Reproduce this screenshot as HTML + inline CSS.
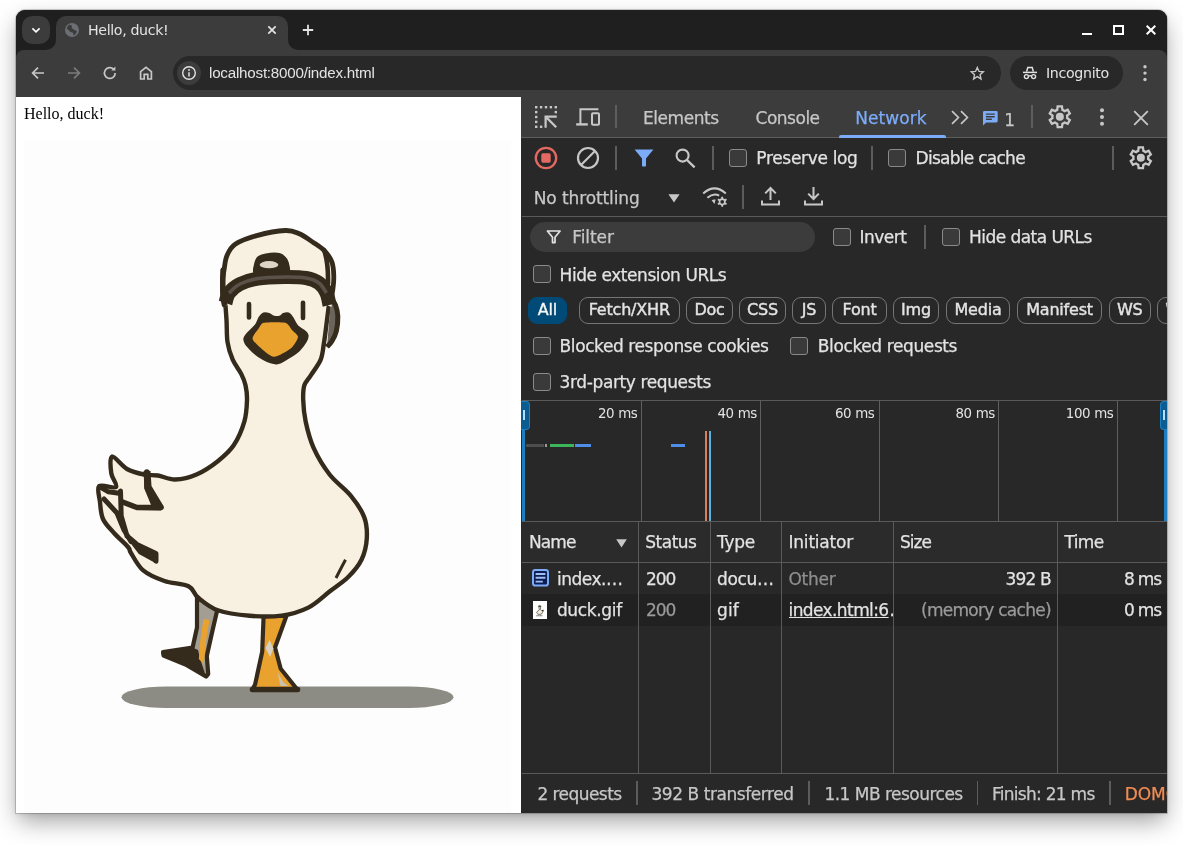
<!DOCTYPE html>
<html><head><meta charset="utf-8"><title>Hello, duck!</title>
<style>
*{box-sizing:border-box;margin:0;padding:0}
html,body{width:1183px;height:845px;overflow:hidden;background:#fff}
body{font-family:"DejaVu Sans","Liberation Sans",sans-serif;position:relative;color:#e3e3e3}
#win{position:absolute;left:16px;top:10px;width:1151px;height:803px;border-radius:9px 9px 0 0;background:#1f1f1f;box-shadow:0 0 0 1px rgba(0,0,0,.17),0 10px 24px -2px rgba(0,0,0,.38),0 1px 4px rgba(0,0,0,.10)}
#clip{position:absolute;left:0;top:0;width:1151px;height:803px;border-radius:9px 9px 0 0;overflow:hidden}
#o{will-change:transform;position:absolute;left:-16px;top:-10px;width:1183px;height:845px}
#o div,#o svg,#o span{position:absolute}
.t{white-space:nowrap;line-height:20px;height:20px}
.ui{font-size:17px;color:#e3e3e3;-webkit-text-stroke:0.25px}
svg{overflow:visible}
.cb{width:17.6px;height:17.6px;border:1.7px solid #8a8a8a;border-radius:3px;background:#3a3a3a}
.vd{width:1.6px;background:#5c5c5c}
.chip{top:297px;height:26.6px;border:1px solid #757575;border-radius:9px;font-size:16px;letter-spacing:-0.2px;line-height:24.6px;text-align:center;color:#e3e3e3;-webkit-text-stroke:0.4px #e3e3e3;white-space:nowrap}
.gl{top:401px;width:1px;height:120px;background:#5e5e5e}
.cl{top:522px;width:1px;height:251px;background:#5a5a5a}
.ov{top:404.3px;font-size:13.4px;letter-spacing:-0.35px;color:#e3e3e3;text-align:right}
</style></head><body>
<div id="win"><div id="clip"><div id="o">
<!-- TABSTRIP -->
<div style="left:16px;top:10px;width:1151px;height:40px;background:#1f1f1f"></div>
<div style="left:22px;top:16px;width:28px;height:28px;border-radius:10.5px;background:#3c3c3c"></div>
<svg style="left:30px;top:24px" width="12" height="12" viewBox="0 0 12 12"><path d="M2.400 4.400 L6 7.800 L9.600 4.400" fill="none" stroke="#fff" stroke-width="1.600"/></svg>
<!-- TOOLBAR -->
<div style="left:16px;top:50px;width:1151px;height:47px;background:#3c3c3c;border-radius:8px 8px 0 0"></div>
<!-- active tab -->
<div style="left:56px;top:16px;width:232px;height:40px;background:#3c3c3c;border-radius:10px 10px 0 0"></div>
<svg style="left:46px;top:40px" width="10" height="10" viewBox="0 0 10 10"><path d="M10 0 V10 H0 A10 10 0 0 0 10 0Z" fill="#3c3c3c"/></svg>
<svg style="left:288px;top:40px" width="10" height="10" viewBox="0 0 10 10"><path d="M0 0 V10 H10 A10 10 0 0 1 0 0Z" fill="#3c3c3c"/></svg>
<!-- favicon globe -->
<svg style="left:65px;top:23px" width="14" height="14" viewBox="0 0 14 14"><circle cx="7" cy="7" r="7" fill="#6b6f74"/><path d="M4.2 1.800 C6 1.600 7.400 2.600 6.800 4.200 C6.400 5.400 8 5.600 8.800 6.600 C9.600 7.600 11.200 7.200 11.800 8.600 C11.400 10.600 10.200 11.800 8.600 12.400 C8 11.400 8.600 10.200 7.600 9.600 C6.400 9 5 9.200 4.400 8 C3.800 6.800 2.200 6.600 1.800 5.200 C2.200 3.800 3 2.600 4.200 1.800Z" fill="#3c3c3c"/></svg>
<span class="t" style="left:88px;top:19.6px;font-size:14.2px;color:#e3e3e3;letter-spacing:-0.36px">Hello, duck!</span>
<svg style="left:266px;top:24px" width="12" height="12" viewBox="0 0 12 12"><path d="M2.3 2.3 L9.7 9.7 M9.7 2.3 L2.3 9.7" stroke="#e3e3e3" stroke-width="1.7" fill="none"/></svg>
<svg style="left:301px;top:23px" width="14" height="14" viewBox="0 0 14 14"><path d="M7 1.8 V12.2 M1.8 7 H12.2" stroke="#e3e3e3" stroke-width="1.8" fill="none"/></svg>
<!-- window controls -->
<div style="left:1082px;top:33px;width:10px;height:2px;background:#fff"></div>
<div style="left:1113px;top:25px;width:11px;height:10px;border:2px solid #fff"></div>
<svg style="left:1146px;top:25px" width="10" height="10" viewBox="0 0 10 10"><path d="M0.7 0.7 L9.3 9.3 M9.3 0.7 L0.7 9.3" stroke="#fff" stroke-width="2" fill="none"/></svg>
<!-- nav icons -->
<svg style="left:31px;top:66px" width="14" height="14" viewBox="0 0 14 14"><path d="M13 7 H2.2 M7 1.6 L1.6 7 L7 12.4" stroke="#c7c7c7" stroke-width="1.7" fill="none"/></svg>
<svg style="left:67px;top:66px" width="14" height="14" viewBox="0 0 14 14"><path d="M1 7 H11.8 M7 1.6 L12.4 7 L7 12.4" stroke="#7b7b7b" stroke-width="1.7" fill="none"/></svg>
<svg style="left:102px;top:65px" width="16" height="16" viewBox="0 0 16 16"><path d="M13.2 8 A5.4 5.4 0 1 1 11.6 4.2" stroke="#c7c7c7" stroke-width="1.7" fill="none"/><path d="M9.2 5.6 H13.4 V1.4 Z" fill="#c7c7c7"/></svg>
<svg style="left:138px;top:65px" width="16" height="16" viewBox="0 0 16 16"><path d="M2.6 14 V6.6 L8 2.4 L13.4 6.6 V14 H9.8 V9.4 H6.2 V14 Z" stroke="#c7c7c7" stroke-width="1.7" fill="none" stroke-linejoin="miter"/></svg>
<!-- omnibox -->
<div style="left:173px;top:56px;width:828px;height:34px;border-radius:17px;background:#282828"></div>
<div style="left:177px;top:61px;width:24px;height:24px;border-radius:12px;background:#3c3c3c"></div>
<svg style="left:181px;top:65px" width="16" height="16" viewBox="0 0 16 16"><circle cx="8" cy="8" r="6.3" stroke="#e3e3e3" stroke-width="1.4" fill="none"/><path d="M8 7.2 V11.4" stroke="#e3e3e3" stroke-width="1.5"/><circle cx="8" cy="5" r="0.95" fill="#e3e3e3"/></svg>
<span class="t" style="left:209px;top:63px;font-family:'Liberation Sans',sans-serif;font-size:15.2px;letter-spacing:-0.23px;color:#e3e3e3">localhost:8000/index.html</span>
<svg style="left:969.6px;top:66px" width="14.6" height="14.6" viewBox="0 0 16 16"><path d="M8 1.6 L9.9 6 L14.6 6.4 L11 9.5 L12.1 14.2 L8 11.7 L3.9 14.2 L5 9.5 L1.4 6.4 L6.1 6 Z" stroke="#c7c7c7" stroke-width="1.5" fill="none" stroke-linejoin="miter"/></svg>
<!-- incognito -->
<div style="left:1010px;top:56px;width:113px;height:34px;border-radius:17px;background:#282828"></div>
<svg style="left:1022px;top:65px" width="16" height="16" viewBox="0 0 16 16"><path d="M4.6 6.6 L5.8 2.6 H10.2 L11.4 6.6" stroke="#e3e3e3" stroke-width="1.5" fill="none"/><path d="M1 7.4 H15" stroke="#e3e3e3" stroke-width="1.5"/><circle cx="4.4" cy="11.6" r="2" stroke="#e3e3e3" stroke-width="1.4" fill="none"/><circle cx="11.6" cy="11.6" r="2" stroke="#e3e3e3" stroke-width="1.4" fill="none"/><path d="M6.4 11.2 Q8 10.2 9.6 11.2" stroke="#e3e3e3" stroke-width="1.3" fill="none"/></svg>
<span class="t" style="left:1046px;top:62.8px;font-size:14.2px;letter-spacing:-0.33px;color:#e3e3e3">Incognito</span>
<svg style="left:1143px;top:65px" width="4" height="16" viewBox="0 0 4 16"><circle cx="2" cy="1.700" r="1.700" fill="#c7c7c7"/><circle cx="2" cy="8.100" r="1.700" fill="#c7c7c7"/><circle cx="2" cy="14.500" r="1.700" fill="#c7c7c7"/></svg>


<!-- DEVTOOLS -->
<div id="dt" style="left:521px;top:97px;width:646px;height:716px;background:#282828"></div>
<!-- PAGE -->
<div id="page" style="left:16px;top:97px;width:505px;height:716px;background:#fff;overflow:hidden">
<span class="t" style="left:8px;top:7px;font-family:'Liberation Serif',serif;font-size:16px;color:#000;line-height:20px">Hello, duck!</span>
<svg style="left:-16px;top:-97px" width="1183" height="845" viewBox="0 0 1183 845">
<rect x="24" y="140" width="487" height="680" fill="#fdfdfd"/>
<rect x="121.5" y="686.500" width="332" height="21.500" rx="45" ry="10.700" fill="#8c8b84"/>
<path d="M197 598 L197 627.500 L192.600 647.500 L163 652 L163.500 655.500 L185.500 664.500 L206 676.500 L208.200 674 L206.800 656 L212.500 630.500 L217.500 609Z" fill="#a39e94" stroke="#352b1d" stroke-width="4.200" stroke-linejoin="round"/>
<path d="M192.600 647.500 L163 652 L163.500 655.500 L185.500 664.500 L206 676.500 L200.500 660 L198 650Z" fill="#352b1d"/>
<path d="M203.500 619 L209.500 620 L206 641 L203.800 664 L198.800 659 L200.600 638Z" fill="#eaa22f"/>
<path d="M263.600 616 L262.200 651.800 L255.100 684.400 L252.300 690 L297.700 690 L280.700 668.800 L275 647.500 L286.400 616Z" fill="#eaa22f" stroke="#352b1d" stroke-width="4.200" stroke-linejoin="round"/>
<path d="M265.500 648 L269.500 640 L273.500 648.500 L270 657Z" fill="#d9d2c4"/>
<path d="M277.500 672 L283 682 L288 686 L280.500 686Z" fill="#c9c2b4"/>
<path d="M252.500 689.500 H297.500" stroke="#352b1d" stroke-width="5.500" stroke-linecap="round"/>
<path d="M224.5 292.0 C224.8 296.7 226.0 311.7 226.5 320.0 C227.0 328.3 226.5 335.4 227.5 342.0 C228.5 348.6 230.4 354.4 232.7 359.7 C235.0 365.0 239.1 369.6 241.2 373.9 C243.3 378.1 244.5 380.8 245.5 385.2 C246.5 389.6 247.2 394.0 247.0 400.0 C246.8 406.0 246.6 413.8 244.4 421.3 C242.2 428.9 238.1 438.7 233.7 445.3 C229.3 451.9 224.0 456.3 217.8 461.2 C211.6 466.1 203.6 471.4 196.5 474.5 C189.4 477.6 181.6 479.3 175.2 479.5 C168.8 479.7 163.2 476.3 158.0 475.5 C152.8 474.7 149.2 475.6 144.0 474.5 C138.8 473.4 132.3 472.0 127.0 469.0 C121.7 466.0 114.6 455.8 112.0 456.5 C109.4 457.2 110.6 468.3 111.3 473.4 C112.0 478.5 118.0 484.9 116.0 487.0 C114.0 489.1 101.9 483.7 99.2 486.2 C96.5 488.7 99.4 496.5 100.0 502.0 C100.6 507.5 100.7 513.8 103.0 519.0 C105.3 524.2 109.8 528.3 114.0 533.0 C118.2 537.7 125.2 543.7 128.0 547.0 C130.8 550.3 128.5 549.1 131.0 553.0 C133.5 556.9 137.6 565.7 143.2 570.4 C148.8 575.1 156.9 578.4 164.5 581.0 C172.1 583.6 182.9 583.5 188.5 586.3 C194.1 589.0 193.1 593.5 198.0 597.5 C202.9 601.5 209.2 607.2 217.8 610.3 C226.4 613.3 239.0 614.9 249.7 615.8 C260.3 616.7 271.9 617.0 281.7 615.6 C291.5 614.2 300.3 611.6 308.3 607.6 C316.3 603.6 323.0 596.6 329.6 591.5 C336.2 586.4 342.9 582.3 348.2 577.0 C353.5 571.7 358.4 566.1 361.5 559.7 C364.6 553.3 366.4 545.5 366.8 538.4 C367.2 531.3 366.9 524.2 364.2 517.1 C361.5 510.0 356.7 502.9 350.9 495.8 C345.1 488.7 335.8 482.5 329.6 474.5 C323.4 466.5 317.6 456.8 313.6 447.9 C309.6 439.0 307.3 429.3 305.6 421.3 C303.9 413.3 303.4 406.0 303.2 400.0 C303.0 394.0 303.1 389.3 304.4 385.2 C305.7 381.1 308.1 379.6 310.8 375.3 C313.5 371.1 318.5 365.1 320.7 359.7 C322.9 354.2 322.9 349.2 324.0 342.6 C325.1 336.0 326.0 327.8 327.0 320.0 C328.0 312.2 329.5 300.0 330.0 296.0 L330 270 L224.500 270Z" fill="#f8f1e2" stroke="none"/>
<path d="M224.5 292.0 C224.8 296.7 226.0 311.7 226.5 320.0 C227.0 328.3 226.5 335.4 227.5 342.0 C228.5 348.6 230.4 354.4 232.7 359.7 C235.0 365.0 239.1 369.6 241.2 373.9 C243.3 378.1 244.5 380.8 245.5 385.2 C246.5 389.6 247.2 394.0 247.0 400.0 C246.8 406.0 246.6 413.8 244.4 421.3 C242.2 428.9 238.1 438.7 233.7 445.3 C229.3 451.9 224.0 456.3 217.8 461.2 C211.6 466.1 203.6 471.4 196.5 474.5 C189.4 477.6 181.6 479.3 175.2 479.5 C168.8 479.7 163.2 476.3 158.0 475.5 C152.8 474.7 149.2 475.6 144.0 474.5 C138.8 473.4 132.3 472.0 127.0 469.0 C121.7 466.0 114.6 455.8 112.0 456.5 C109.4 457.2 110.6 468.3 111.3 473.4 C112.0 478.5 118.0 484.9 116.0 487.0 C114.0 489.1 101.9 483.7 99.2 486.2 C96.5 488.7 99.4 496.5 100.0 502.0 C100.6 507.5 100.7 513.8 103.0 519.0 C105.3 524.2 109.8 528.3 114.0 533.0 C118.2 537.7 125.2 543.7 128.0 547.0 C130.8 550.3 128.5 549.1 131.0 553.0 C133.5 556.9 137.6 565.7 143.2 570.4 C148.8 575.1 156.9 578.4 164.5 581.0 C172.1 583.6 182.9 583.5 188.5 586.3 C194.1 589.0 193.1 593.5 198.0 597.5 C202.9 601.5 209.2 607.2 217.8 610.3 C226.4 613.3 239.0 614.9 249.7 615.8 C260.3 616.7 271.9 617.0 281.7 615.6 C291.5 614.2 300.3 611.6 308.3 607.6 C316.3 603.6 323.0 596.6 329.6 591.5 C336.2 586.4 342.9 582.3 348.2 577.0 C353.5 571.7 358.4 566.1 361.5 559.7 C364.6 553.3 366.4 545.5 366.8 538.4 C367.2 531.3 366.9 524.2 364.2 517.1 C361.5 510.0 356.7 502.9 350.9 495.8 C345.1 488.7 335.8 482.5 329.6 474.5 C323.4 466.5 317.6 456.8 313.6 447.9 C309.6 439.0 307.3 429.3 305.6 421.3 C303.9 413.3 303.4 406.0 303.2 400.0 C303.0 394.0 303.1 389.3 304.4 385.2 C305.7 381.1 308.1 379.6 310.8 375.3 C313.5 371.1 318.5 365.1 320.7 359.7 C322.9 354.2 322.9 349.2 324.0 342.6 C325.1 336.0 326.0 327.8 327.0 320.0 C328.0 312.2 329.5 300.0 330.0 296.0" fill="none" stroke="#352b1d" stroke-width="4.400" stroke-linejoin="round"/>
<path d="M146.800 472 L147 487.500 L152.500 499 L161 507.500 L137 507.500 L122.600 502" fill="none" stroke="#352b1d" stroke-width="5.600" stroke-linejoin="round" stroke-linecap="round"/>
<path d="M99.500 486.500 L108.500 491.800 L119 493.300 M120.500 491 L121.200 516 L127 536 L137 544.500 L156 553.500 L156 561 M104 499 L117 513 L124 530 L131 541.500" fill="none" stroke="#352b1d" stroke-width="5" stroke-linejoin="round" stroke-linecap="round"/>
<path d="M127 536 L137 544.500 L156 553.500 L156.500 562 L140 553Z" fill="#352b1d" stroke="#352b1d" stroke-width="3" stroke-linejoin="round"/>
<path d="M143.500 471 L150.500 471 L151.500 486 L163.500 506 L161 510.500 L138 510 L137 505.500 L151 505 L144.500 489Z" fill="#352b1d"/>
<path d="M345.500 559.700 Q339 572 336 578" fill="none" stroke="#352b1d" stroke-width="3"/>
<path d="M331.0 298.0 C331.8 299.2 334.4 302.0 335.5 305.0 C336.6 308.0 337.7 311.7 337.8 316.0 C337.9 320.3 337.4 326.8 336.4 331.0 C335.4 335.2 333.6 338.3 332.0 341.0 C330.4 343.7 327.8 346.0 327.0 347.0" fill="#6a645a" stroke="#352b1d" stroke-width="5"/>
<path d="M224.1 305.0 C223.5 303.0 222.8 297.9 222.6 293.9 C222.4 289.9 222.4 285.1 222.7 281.1 C222.9 277.1 223.4 274.0 224.1 269.7 C224.8 265.4 225.1 259.8 227.0 255.5 C228.9 251.2 230.5 247.4 235.5 244.1 C240.5 240.8 248.5 237.9 256.8 235.6 C265.1 233.3 278.1 230.8 285.2 230.5 C292.3 230.2 294.7 231.8 299.4 233.8 C304.1 235.8 309.3 239.8 313.6 242.7 C317.9 245.6 321.9 248.0 325.0 251.3 C328.1 254.6 330.6 258.4 332.1 262.6 C333.6 266.9 333.7 272.5 333.8 276.8 C333.9 281.1 333.5 284.3 333.0 288.2 C332.5 292.1 331.7 297.0 331.0 300.0 C330.3 303.0 334.2 308.5 329.0 306.0 C323.8 303.5 313.2 288.5 300.0 285.0 C286.8 281.5 262.3 281.5 250.0 285.0 C237.7 288.5 230.3 302.7 226.0 306.0 C221.7 309.3 224.7 307.0 224.1 305.0Z" fill="#f8f1e2" stroke="none"/>
<path d="M224.1 305.0 C223.8 303.1 222.8 297.9 222.6 293.9 C222.4 289.9 222.4 285.1 222.7 281.1 C222.9 277.1 223.4 274.0 224.1 269.7 C224.8 265.4 225.1 259.8 227.0 255.5 C228.9 251.2 230.5 247.4 235.5 244.1 C240.5 240.8 248.5 237.9 256.8 235.6 C265.1 233.3 278.1 230.8 285.2 230.5 C292.3 230.2 294.7 231.8 299.4 233.8 C304.1 235.8 309.3 239.8 313.6 242.7 C317.9 245.6 321.9 248.0 325.0 251.3 C328.1 254.6 330.6 258.4 332.1 262.6 C333.6 266.9 333.7 272.5 333.8 276.8 C333.9 281.1 333.5 284.3 333.0 288.2 C332.5 292.1 331.3 298.0 331.0 300.0" fill="none" stroke="#352b1d" stroke-width="4.800" stroke-linecap="round"/>
<path d="M324 250 Q328.500 262 328 284" fill="none" stroke="#352b1d" stroke-width="4.600" stroke-linecap="round"/>
<path d="M223 270 Q222 285 224.500 303" fill="none" stroke="#352b1d" stroke-width="5.400" stroke-linecap="round"/>
<path d="M225.5 303.0 C226.1 301.3 226.6 296.2 229.0 293.0 C231.4 289.8 235.2 286.4 240.0 284.0 C244.8 281.6 250.5 279.7 258.0 278.5 C265.5 277.3 277.0 277.1 285.0 277.0 C293.0 276.9 300.3 277.0 306.0 278.0 C311.7 279.0 315.6 280.5 319.0 283.0 C322.4 285.5 324.8 289.3 326.5 293.0 C328.2 296.7 329.0 303.0 329.5 305.0" fill="none" stroke="#352b1d" stroke-width="14" stroke-linecap="butt"/>
<path d="M229.0 293.0 C230.8 291.5 235.2 286.4 240.0 284.0 C244.8 281.6 250.5 279.7 258.0 278.5 C265.5 277.3 277.0 277.1 285.0 277.0 C293.0 276.9 300.3 277.0 306.0 278.0 C311.7 279.0 315.6 280.5 319.0 283.0 C322.4 285.5 325.2 291.3 326.5 293.0" fill="none" stroke="#5a5248" stroke-width="3.600" stroke-linecap="butt"/>
<path d="M255.0 269.0 C255.5 267.3 256.2 261.2 258.0 259.0 C259.8 256.8 262.5 256.2 266.0 255.5 C269.5 254.8 275.8 254.2 279.0 255.0 C282.2 255.8 284.0 257.8 285.5 260.0 C287.0 262.2 287.6 266.7 288.0 268.0 L288 272 L255 272Z" fill="#352b1d" stroke="#352b1d" stroke-width="4" stroke-linejoin="round"/>
<ellipse cx="269" cy="264.700" rx="9.300" ry="3.600" fill="#ddd6c6"/>
<path d="M249 304 V317.500 M303 302.800 V318" stroke="#352b1d" stroke-width="4.600" stroke-linecap="round"/>
<path d="M245.5 338.4 C246.4 334.7 254.0 329.4 256.5 326.0 C259.0 322.6 259.2 319.9 260.5 318.0 C261.8 316.1 262.7 315.0 264.0 314.5 C265.3 314.0 266.9 314.4 268.5 315.0 C270.1 315.6 272.0 317.3 273.9 317.8 C275.8 318.3 278.3 318.3 280.0 317.8 C281.7 317.3 282.7 315.6 284.0 315.0 C285.3 314.4 286.7 313.9 288.0 314.5 C289.3 315.1 290.2 316.4 291.6 318.5 C293.0 320.6 294.1 324.2 296.6 327.0 C299.1 329.8 306.0 331.9 306.5 335.5 C307.0 339.1 302.5 344.8 299.4 348.3 C296.3 351.9 291.9 354.5 288.1 356.8 C284.3 359.1 280.7 362.1 276.7 362.3 C272.7 362.5 268.2 360.5 263.9 358.2 C259.6 355.9 254.2 351.6 251.1 348.3 C248.0 345.0 244.6 342.1 245.5 338.4Z" fill="#352b1d" stroke="#352b1d" stroke-width="4.200" stroke-linejoin="round"/>
<path d="M252.5 338.4 C252.4 336.2 257.7 329.8 259.0 328.0 C260.3 326.2 260.9 323.3 264.0 322.7 C267.1 322.1 281.9 321.8 285.2 322.7 C288.5 323.6 290.5 328.3 292.0 330.0 C293.5 331.7 298.1 334.9 298.0 337.0 C297.9 339.1 293.8 346.0 291.0 348.3 C288.2 350.6 277.6 357.0 273.9 356.8 C270.2 356.6 262.1 349.0 259.6 346.9 C257.1 344.8 252.6 340.6 252.5 338.4Z" fill="#eaa22f"/>
</svg></div>
<!-- DT TAB BAR -->
<div style="left:521px;top:97px;width:646px;height:40px;background:#3c3c3c"></div>
<div style="left:521px;top:137px;width:646px;height:1px;background:#5e5e5e"></div>

<!-- inspect icon -->
<svg style="left:535px;top:106px" width="22" height="22" viewBox="0 0 22 22"><g fill="#c7c7c7"><rect x="0" y="0" width="2.4" height="2.4"/><rect x="4.9" y="0" width="2.4" height="2.4"/><rect x="9.8" y="0" width="2.4" height="2.4"/><rect x="14.7" y="0" width="2.4" height="2.4"/><rect x="19.6" y="0" width="2.4" height="2.4"/><rect x="0" y="4.9" width="2.4" height="2.4"/><rect x="0" y="9.8" width="2.4" height="2.4"/><rect x="0" y="14.7" width="2.4" height="2.4"/><rect x="0" y="19.6" width="2.4" height="2.4"/><rect x="19.6" y="4.9" width="2.4" height="2.4"/><rect x="4.9" y="19.6" width="2.4" height="2.4"/></g><path d="M10.6 21.8 V10.6 H21.8 M11.4 11.400 L21.2 21.200" fill="none" stroke="#c7c7c7" stroke-width="2.2"/></svg>
<!-- device icon -->
<svg style="left:576px;top:108px" width="25" height="19" viewBox="0 0 25 19"><path d="M4.4 16.4 V1.2 H22.4" fill="none" stroke="#c7c7c7" stroke-width="2"/><path d="M0.2 16.400 H11.8" stroke="#c7c7c7" stroke-width="2.4"/><rect x="16" y="5.200" width="7" height="11.600" rx="1" fill="none" stroke="#c7c7c7" stroke-width="2"/></svg>
<div class="vd" style="left:615.1px;top:105px;height:23px;background:#5e5e5e"></div>
<span class="t ui" style="left:643.10px;top:108.02px;color:#c7c7c7;letter-spacing:-0.468px">Elements</span>
<span class="t ui" style="left:755.50px;top:108.02px;color:#c7c7c7;letter-spacing:-0.484px">Console</span>
<span class="t ui" style="left:855.30px;top:108.02px;color:#7cacf8;letter-spacing:0.046px">Network</span>
<div style="left:839px;top:135.400px;width:107px;height:2.600px;background:#7cacf8;border-radius:2px 2px 0 0"></div>
<svg style="left:951px;top:110px" width="18" height="15" viewBox="0 0 18 15"><path d="M1 1.2 L7.4 7.5 L1 13.8 M10 1.2 L16.4 7.5 L10 13.8" fill="none" stroke="#c7c7c7" stroke-width="1.7"/></svg>
<svg style="left:982.5px;top:110.800px" width="14.7" height="14.7" viewBox="0 0 16 16"><path d="M1.5 0 H14.5 A1.5 1.5 0 0 1 16 1.5 V11 A1.5 1.5 0 0 1 14.5 12.5 H3.4 L0 15.8 V1.5 A1.5 1.5 0 0 1 1.5 0 Z" fill="#7cacf8"/><path d="M3.2 3.4 H12.8 M3.2 6.2 H12.8 M3.2 9 H9.6" stroke="#3c3c3c" stroke-width="1.5"/></svg>
<span class="t ui" style="left:1004.30px;top:109.52px;color:#c7c7c7;letter-spacing:0.000px">1</span>
<div class="vd" style="left:1031.1px;top:105px;height:23px;background:#5e5e5e"></div>
<svg class="gear" style="left:1046.1px;top:103.4px" width="27.6" height="27.6" viewBox="0 0 24 24"><path fill="#c7c7c7" fill-rule="evenodd" d="M9.25 22l-.4-3.2a5.5 5.5 0 0 1-1.16-.68l-2.97 1.25-2.75-4.75 2.57-1.95a4.6 4.6 0 0 1 0-1.34L1.97 9.38l2.75-4.75L7.7 5.88a6.8 6.8 0 0 1 1.15-.68L9.25 2h5.5l.4 3.2c.42.2.8.42 1.16.68l2.97-1.25 2.75 4.75-2.57 1.95a4.600 4.600 0 0 1 0 1.340l2.570 1.950-2.750 4.750-2.950-1.250a6.800 6.800 0 0 1-1.150.680l-.4 3.200h-5.500zm1.750-2h1.980l.35-2.650a5.600 5.600 0 0 0 2.620-1.520l2.470 1.020.98-1.700-2.150-1.630a5.500 5.500 0 0 0 0-3.040l2.150-1.630-.98-1.700-2.470 1.050a5.500 5.500 0 0 0-2.620-1.550L13 4h-1.980l-.35 2.650a5.600 5.600 0 0 0-2.620 1.520L5.580 7.150l-.98 1.700 2.150 1.600a5.500 5.500 0 0 0 0 3.080L4.600 15.150l.98 1.700 2.470-1.050a5.500 5.500 0 0 0 2.600 1.550L11 20zm1.050-4.500a3.500 3.500 0 1 0 0-7 3.500 3.500 0 0 0 0 7z"/></svg>
<svg style="left:1100px;top:108px" width="4" height="18" viewBox="0 0 4 18"><circle cx="2" cy="2.300" r="2" fill="#c7c7c7"/><circle cx="2" cy="9" r="2" fill="#c7c7c7"/><circle cx="2" cy="15.700" r="2" fill="#c7c7c7"/></svg>
<svg style="left:1133px;top:110px" width="16" height="16" viewBox="0 0 16 16"><path d="M1.2 1.2 L14.8 14.8 M14.8 1.2 L1.2 14.8" stroke="#c7c7c7" stroke-width="1.8" fill="none"/></svg>
<!-- NETWORK TOOLBAR ROW 1 -->
<svg style="left:535px;top:147px" width="22" height="22" viewBox="0 0 22 22"><circle cx="11" cy="11" r="10.200" fill="none" stroke="#e46962" stroke-width="2.3"/><rect x="6.300" y="6.300" width="9.400" height="9.400" rx="1.6" fill="#e46962"/></svg>
<svg style="left:577px;top:147px" width="22" height="22" viewBox="0 0 22 22"><circle cx="11" cy="11" r="10" fill="none" stroke="#c7c7c7" stroke-width="2.2"/><path d="M4 18 L18 4" stroke="#c7c7c7" stroke-width="2.2"/></svg>
<div class="vd" style="left:615.1px;top:146px;height:24px"></div>
<svg style="left:634px;top:149px" width="20" height="18" viewBox="0 0 20 18"><path d="M0.6 0.4 H19.4 L12 9.6 V16.4 Q12 17.6 10.8 17.6 H9.2 Q8 17.6 8 16.4 V9.6 Z" fill="#7cacf8"/></svg>
<svg style="left:675px;top:148px" width="21" height="20" viewBox="0 0 21 20"><circle cx="7.6" cy="7.6" r="6" fill="none" stroke="#c7c7c7" stroke-width="2.1"/><path d="M12 12 L19.6 19.4" stroke="#c7c7c7" stroke-width="2.4"/></svg>
<div class="vd" style="left:712.1px;top:146px;height:24px"></div>
<div class="cb" style="left:729.2px;top:149.1px"></div>
<span class="t ui" style="left:756.30px;top:148.22px;color:#e3e3e3;letter-spacing:-0.323px">Preserve log</span>
<div class="vd" style="left:871.1px;top:146px;height:24px"></div>
<div class="cb" style="left:888.2px;top:149.1px"></div>
<span class="t ui" style="left:915.60px;top:148.22px;color:#e3e3e3;letter-spacing:-0.732px">Disable cache</span>
<div class="vd" style="left:1112.1px;top:146px;height:24px"></div>
<svg class="gear" style="left:1127.1px;top:143.700px" width="27.6" height="27.6" viewBox="0 0 24 24"><path fill="#c7c7c7" fill-rule="evenodd" d="M9.25 22l-.4-3.2a5.5 5.5 0 0 1-1.16-.68l-2.97 1.25-2.75-4.75 2.57-1.95a4.6 4.6 0 0 1 0-1.34L1.97 9.38l2.75-4.75L7.7 5.88a6.8 6.8 0 0 1 1.15-.68L9.25 2h5.5l.4 3.2c.42.2.8.42 1.16.68l2.97-1.25 2.75 4.75-2.57 1.95a4.600 4.600 0 0 1 0 1.340l2.570 1.950-2.750 4.750-2.950-1.250a6.800 6.800 0 0 1-1.150.680l-.4 3.200h-5.500zm1.750-2h1.980l.35-2.650a5.600 5.600 0 0 0 2.620-1.520l2.470 1.020.98-1.700-2.150-1.630a5.500 5.500 0 0 0 0-3.040l2.150-1.630-.98-1.700-2.470 1.050a5.500 5.500 0 0 0-2.620-1.550L13 4h-1.980l-.35 2.650a5.600 5.600 0 0 0-2.620 1.520L5.580 7.150l-.98 1.700 2.150 1.600a5.500 5.500 0 0 0 0 3.080L4.600 15.150l.98 1.700 2.470-1.050a5.500 5.500 0 0 0 2.600 1.550L11 20zm1.050-4.500a3.500 3.500 0 1 0 0-7 3.500 3.500 0 0 0 0 7z"/></svg>
<!-- ROW 2 -->
<span class="t ui" style="left:533.70px;top:187.72px;color:#c7c7c7;letter-spacing:-0.102px">No throttling</span>
<svg style="left:668px;top:194px" width="12" height="9" viewBox="0 0 12 9"><path d="M0.4 0.2 H11.6 L6 8.6 Z" fill="#c7c7c7"/></svg>
<svg style="left:702px;top:186px" width="26" height="21" viewBox="0 0 26 21"><path d="M1.2 7.4 Q12.5 -2.6 23.8 7.4" fill="none" stroke="#c7c7c7" stroke-width="2"/><path d="M5.4 11.8 Q11.5 6.4 17.2 9.6" fill="none" stroke="#c7c7c7" stroke-width="2"/><path d="M9.6 14.200 L12.5 18 L13.6 13.600 Q11.6 13 9.600 14.200Z" fill="#c7c7c7"/><circle cx="20.2" cy="15.8" r="2.700" fill="none" stroke="#c7c7c7" stroke-width="1.700"/><path d="M22.62 17.20 L24.53 18.30 M20.20 18.60 L20.20 20.80 M17.78 17.20 L15.87 18.30 M17.78 14.40 L15.87 13.30 M20.20 13.00 L20.20 10.80 M22.62 14.40 L24.53 13.30 " stroke="#c7c7c7" stroke-width="1.900" fill="none"/></svg>
<div class="vd" style="left:742.1px;top:185px;height:24px"></div>
<svg style="left:761px;top:186px" width="19" height="20" viewBox="0 0 19 20"><path d="M9.5 14 V2.4 M4.2 7.4 L9.5 2 L14.8 7.4" fill="none" stroke="#c7c7c7" stroke-width="2"/><path d="M1 14.6 V18.6 H18 V14.6" fill="none" stroke="#c7c7c7" stroke-width="2"/></svg>
<svg style="left:803.5px;top:186px" width="19" height="20" viewBox="0 0 19 20"><path d="M9.5 1 V12.6 M4.2 7.6 L9.5 13 L14.8 7.600" fill="none" stroke="#c7c7c7" stroke-width="2"/><path d="M1 14.6 V18.6 H18 V14.6" fill="none" stroke="#c7c7c7" stroke-width="2"/></svg>
<div style="left:522px;top:216px;width:645px;height:1px;background:#5a5a5a"></div>
<!-- FILTER ROW -->
<div style="left:530px;top:222px;width:285px;height:30px;border-radius:15px;background:#3c3c3c"></div>
<svg style="left:546.3px;top:230.300px" width="15.5" height="14" viewBox="0 0 15.5 14"><path d="M1.4 1 H14.100 L9 7.200 V12.600 H6.500 V7.200 Z" fill="none" stroke="#e3e3e3" stroke-width="1.7" stroke-linejoin="round"/></svg>
<span class="t ui" style="left:572.20px;top:226.82px;color:#c7c7c7;letter-spacing:-0.084px">Filter</span>
<div class="cb" style="left:833.2px;top:228.1px"></div>
<span class="t ui" style="left:859.50px;top:226.82px;color:#e3e3e3;letter-spacing:-0.527px">Invert</span>
<div class="vd" style="left:924.1px;top:225px;height:24px"></div>
<div class="cb" style="left:942.2px;top:228.1px"></div>
<span class="t ui" style="left:969.10px;top:226.82px;color:#e3e3e3;letter-spacing:-0.553px">Hide data URLs</span>
<div class="cb" style="left:533.2px;top:265.1px"></div>
<span class="t ui" style="left:559.60px;top:265.02px;color:#e3e3e3;letter-spacing:-0.443px">Hide extension URLs</span>
<!-- CHIPS -->
<div class="chip" style="left:527.6px;width:39.4px;background:#004a77;border-color:#004a77;color:#fff">All</div>
<div class="chip" style="left:578.6px;width:101.4px">Fetch/XHR</div>
<div class="chip" style="left:685.6px;width:47.9px">Doc</div>
<div class="chip" style="left:739.1px;width:46.9px">CSS</div>
<div class="chip" style="left:791.6px;width:34.9px">JS</div>
<div class="chip" style="left:832.1px;width:54.9px">Font</div>
<div class="chip" style="left:892.6px;width:46.9px">Img</div>
<div class="chip" style="left:945.6px;width:64.9px">Media</div>
<div class="chip" style="left:1016.6px;width:85.9px">Manifest</div>
<div class="chip" style="left:1108.6px;width:42.4px">WS</div>
<div class="chip" style="left:1156.6px;width:60.9px;text-align:left;padding-left:8px">Wasm</div>
<div class="cb" style="left:533.2px;top:337.1px"></div>
<span class="t ui" style="left:559.60px;top:336.22px;color:#e3e3e3;letter-spacing:-0.407px">Blocked response cookies</span>
<div class="cb" style="left:790.2px;top:337.1px"></div>
<span class="t ui" style="left:817.80px;top:336.22px;color:#e3e3e3;letter-spacing:-0.388px">Blocked requests</span>
<div class="cb" style="left:533.2px;top:373.1px"></div>
<span class="t ui" style="left:559.60px;top:372.42px;color:#e3e3e3;letter-spacing:-0.385px">3rd-party requests</span>
<!-- OVERVIEW -->
<div style="left:522px;top:400px;width:645px;height:1px;background:#5a5a5a"></div>
<div class="gl" style="left:641px"></div><div class="gl" style="left:760px"></div><div class="gl" style="left:879px"></div><div class="gl" style="left:998px"></div><div class="gl" style="left:1117px"></div>
<span class="t ov" style="left:560px;width:77.5px">20 ms</span>
<span class="t ov" style="left:680px;width:77px">40 ms</span>
<span class="t ov" style="left:797px;width:77.5px">60 ms</span>
<span class="t ov" style="left:917px;width:78px">80 ms</span>
<span class="t ov" style="left:1036px;width:77.5px">100 ms</span>
<div style="left:526px;top:443.5px;width:18px;height:3.5px;background:#4d4d4d"></div>
<div style="left:544.5px;top:443.5px;width:2.5px;height:3.5px;background:#9a9a9a"></div>
<div style="left:549.5px;top:443.5px;width:24.5px;height:3.5px;background:#3cb55a"></div>
<div style="left:575px;top:443.5px;width:15.5px;height:3.5px;background:#4f8ee8"></div>
<div style="left:671px;top:443.5px;width:14px;height:3.5px;background:#4f8ee8"></div>
<div style="left:705px;top:431px;width:2.4px;height:90px;background:#d9815d"></div>
<div style="left:709px;top:431px;width:2.4px;height:90px;background:#5fb0dc"></div>
<!-- handles -->
<div style="left:521.5px;top:401px;width:3.5px;height:120px;background:#1c7dc0"></div>
<div style="left:521px;top:401px;width:9px;height:29px;background:#0b5c90;border-radius:0 4px 4px 0;border:1px solid #1c7dc0;border-left:0"></div>
<div style="left:523px;top:410px;width:2px;height:10px;background:#b5dcff"></div>
<div style="left:1164px;top:401px;width:3px;height:120px;background:#1c7dc0"></div>
<div style="left:1160px;top:401px;width:9px;height:29px;background:#0b5c90;border-radius:4px 0 0 4px;border:1px solid #1c7dc0;border-right:0"></div>
<div style="left:1163px;top:410px;width:2px;height:10px;background:#b5dcff"></div>
<!-- TABLE -->
<div style="left:522px;top:521px;width:645px;height:1px;background:#5a5a5a"></div>
<div style="left:522px;top:522px;width:645px;height:40px;background:#2b2b2b"></div>
<div style="left:522px;top:562px;width:645px;height:1px;background:#5a5a5a"></div>
<div style="left:522px;top:594px;width:645px;height:31.5px;background:#212121"></div>
<div class="cl" style="left:638px"></div><div class="cl" style="left:710px"></div><div class="cl" style="left:781px"></div><div class="cl" style="left:893px"></div><div class="cl" style="left:1057px"></div>
<span class="t ui" style="left:529.00px;top:531.82px;color:#e3e3e3;letter-spacing:-0.889px">Name</span>
<svg style="left:616px;top:538.5px" width="11" height="9" viewBox="0 0 11 9"><path d="M0.2 0.2 H10.8 L5.5 8.6 Z" fill="#c7c7c7"/></svg>
<span class="t ui" style="left:645.30px;top:531.82px;color:#e3e3e3;letter-spacing:-0.512px">Status</span>
<span class="t ui" style="left:717.00px;top:531.82px;color:#e3e3e3;letter-spacing:-0.287px">Type</span>
<span class="t ui" style="left:788.50px;top:531.82px;color:#e3e3e3;letter-spacing:-0.208px">Initiator</span>
<span class="t ui" style="left:899.90px;top:531.82px;color:#e3e3e3;letter-spacing:-0.974px">Size</span>
<span class="t ui" style="left:1064.50px;top:531.82px;color:#e3e3e3;letter-spacing:-0.626px">Time</span>
<!-- row 1 -->
<svg style="left:531.5px;top:569.2px" width="17" height="17.600" viewBox="0 0 17 17.600"><rect x="1" y="1" width="15" height="15.600" rx="2.400" fill="#0c1d52" stroke="#7cacf8" stroke-width="2"/><path d="M3.600 5 H13.400 M3.600 8.800 H13.400 M3.600 12.600 H10.800" stroke="#9dbdf5" stroke-width="1.900"/></svg>
<span class="t ui" style="left:556.90px;top:568.62px;color:#e3e3e3;letter-spacing:-0.488px">index.…</span>
<span class="t ui" style="left:645.90px;top:568.62px;color:#e3e3e3;letter-spacing:-1.050px">200</span>
<span class="t ui" style="left:717.00px;top:568.62px;color:#e3e3e3;letter-spacing:-0.343px">docu…</span>
<span class="t ui" style="left:788.50px;top:568.62px;color:#8f8f8f;letter-spacing:-0.274px">Other</span>
<span class="t ui" style="left:1005.40px;top:568.62px;color:#e3e3e3;letter-spacing:-0.823px">392 B</span>
<span class="t ui" style="left:1123.90px;top:568.62px;color:#e3e3e3;letter-spacing:-1.134px">8 ms</span>
<!-- row 2 -->
<div style="left:533px;top:601px;width:14.200px;height:18px;background:#fff"></div>
<svg style="left:533px;top:601px" width="14.200" height="18" viewBox="0 0 14.200 18"><path d="M3 14.800 H9.600" stroke="#8a8a80" stroke-width="0.900"/><path d="M5.800 5.600 L6.400 9 Q4 10 3.600 12 Q4.400 13.600 7 13.400 Q9.400 13.200 9.800 11 L10.400 9.800 L9 10 Q8 9.400 7.600 8.600 L7.600 5.600Z" fill="#f4efe2" stroke="#4a4436" stroke-width="0.700"/><path d="M5 5 Q6.600 3.400 8.400 5 L8.200 5.800 H5.200Z" fill="#3c4a2a"/><path d="M9 9.600 L10.600 9.200" stroke="#2a261c" stroke-width="1"/><path d="M5.400 13.400 V14.600 M7.600 13.400 V14.600" stroke="#6a6450" stroke-width="0.700"/></svg>
<span class="t ui" style="left:556.90px;top:599.92px;color:#e3e3e3;letter-spacing:-0.345px">duck.gif</span>
<span class="t ui" style="left:645.90px;top:599.92px;color:#9a9a9a;letter-spacing:-1.050px">200</span>
<span class="t ui" style="left:717.00px;top:599.92px;color:#e3e3e3;letter-spacing:0.100px">gif</span>
<div style="left:788.9px;top:596px;width:104.100px;height:28px;overflow:hidden"><span class="t ui" style="left:-0.40px;top:3.92px;color:#e3e3e3;letter-spacing:-0.590px;text-decoration:underline;text-underline-offset:1.2px;text-decoration-thickness:1.3px">index.html:6</span><span class="t ui" style="left:100.4px;top:4px;color:#e3e3e3">…</span></div>
<span class="t ui" style="left:921.10px;top:599.92px;color:#9a9a9a;letter-spacing:-0.739px">(memory cache)</span>
<span class="t ui" style="left:1123.90px;top:599.92px;color:#e3e3e3;letter-spacing:-1.134px">0 ms</span>
<!-- STATUS BAR -->
<div style="left:522px;top:773px;width:645px;height:1px;background:#5a5a5a"></div>
<div style="left:522px;top:774px;width:645px;height:39px;background:#282828"></div>
<span class="t ui" style="left:537.40px;top:783.72px;color:#c7c7c7;letter-spacing:-0.550px">2 requests</span>
<div class="vd" style="left:636.0px;top:781px;height:24px"></div>
<span class="t ui" style="left:651.40px;top:783.72px;color:#c7c7c7;letter-spacing:-0.431px">392 B transferred</span>
<div class="vd" style="left:808.0px;top:781px;height:24px"></div>
<span class="t ui" style="left:824.40px;top:783.72px;color:#c7c7c7;letter-spacing:-0.516px">1.1 MB resources</span>
<div class="vd" style="left:976.5px;top:781px;height:24px"></div>
<span class="t ui" style="left:992.00px;top:783.72px;color:#c7c7c7;letter-spacing:-0.722px">Finish: 21 ms</span>
<div class="vd" style="left:1109.0px;top:781px;height:24px"></div>
<span class="t ui" style="left:1124.70px;top:783.72px;color:#f28b54;letter-spacing:-0.050px">DOMContentLoaded: 33 ms</span>

</div></div></div>
</body></html>
